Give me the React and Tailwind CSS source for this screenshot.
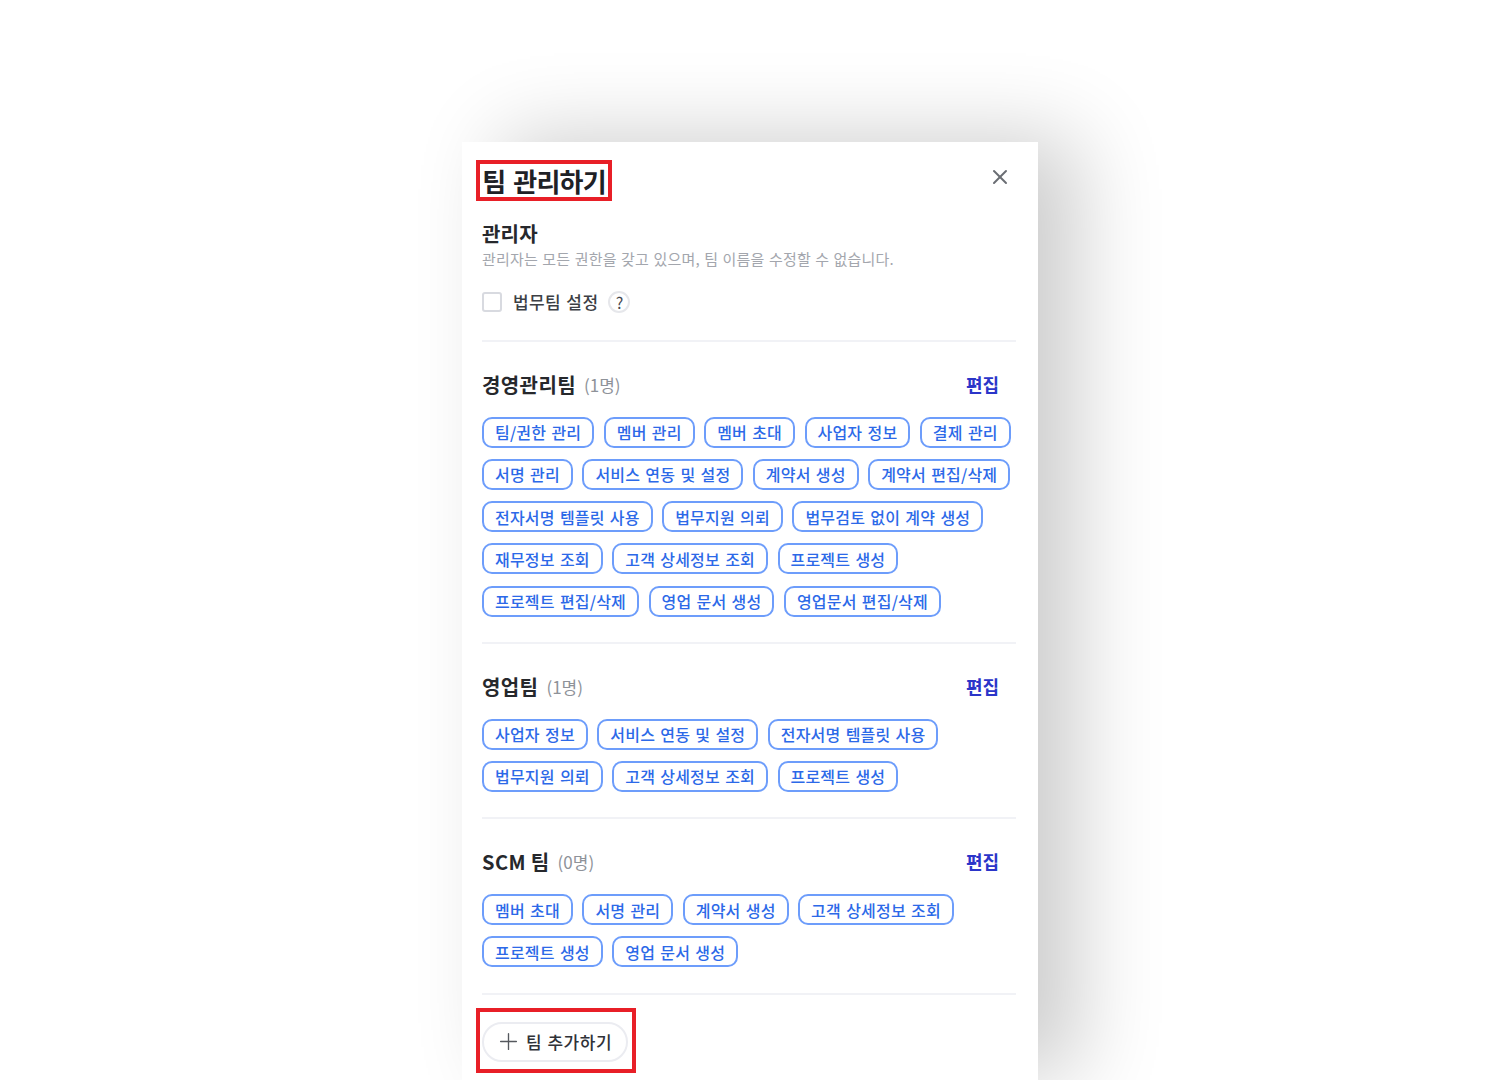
import React from 'react';
import { X, Plus } from 'lucide-react';

const teams = [
  {
    name: '경영관리팀',
    count: '(1명)',
    rows: [
      ['팀/권한 관리', '멤버 관리', '멤버 초대', '사업자 정보', '결제 관리'],
      ['서명 관리', '서비스 연동 및 설정', '계약서 생성', '계약서 편집/삭제'],
      ['전자서명 템플릿 사용', '법무지원 의뢰', '법무검토 없이 계약 생성'],
      ['재무정보 조회', '고객 상세정보 조회', '프로젝트 생성'],
      ['프로젝트 편집/삭제', '영업 문서 생성', '영업문서 편집/삭제'],
    ],
  },
  {
    name: '영업팀',
    count: '(1명)',
    rows: [
      ['사업자 정보', '서비스 연동 및 설정', '전자서명 템플릿 사용'],
      ['법무지원 의뢰', '고객 상세정보 조회', '프로젝트 생성'],
    ],
  },
  {
    name: 'SCM 팀',
    count: '(0명)',
    rows: [
      ['멤버 초대', '서명 관리', '계약서 생성', '고객 상세정보 조회'],
      ['프로젝트 생성', '영업 문서 생성'],
    ],
  },
];

function Team({ team }) {
  return (
    <section className="border-b-2 border-[#f1f2f6] pt-[27px] pb-[25.4px]">
      <div className="flex h-[32px] items-center justify-between pr-[17px]">
        <div className="flex items-center gap-[8px]">
          <h3 className="text-[20px] font-bold leading-[32px] tracking-[0.4px] text-[#26282c]">{team.name}</h3>
          <span className="text-[17px] leading-[32px] text-[#8e9299]">{team.count}</span>
        </div>
        <button className="-mt-[2px] text-[18px] font-bold leading-[32px] text-[#2b35c9]">편집</button>
      </div>
      <div className="mt-[15.8px] flex flex-col gap-[11.2px]">
        {team.rows.map((row, i) => (
          <div key={i} className="flex gap-[9.5px]">
            {row.map((chip) => (
              <span
                key={chip}
                className="flex h-[31px] items-center whitespace-nowrap rounded-[10px] border-2 border-[#6d9dfb] bg-white px-[11px] text-[16px] font-medium tracking-[0.2px] [word-spacing:1.4px] text-[#2c69e8]"
              >
                {chip}
              </span>
            ))}
          </div>
        ))}
      </div>
    </section>
  );
}

export default function App() {
  return (
    <div className="h-[1080px] overflow-hidden bg-white pl-[462px] pt-[142px] font-['Noto_Sans_CJK_KR','Noto_Sans',sans-serif]">
      <div className="h-[938px] w-[576px] bg-white pl-[20px] pr-[22px] pt-[18px] shadow-[40px_-5px_80px_rgba(0,0,0,0.2)]">
        <div className="flex items-start justify-between">
          <h1 className="-ml-[6px] flex h-[41px] w-[136px] items-center justify-center border-[4px] border-[#e81f27] text-[26px] font-bold tracking-[-0.8px] [word-spacing:3px] text-[#1e2126]">
            팀 관리하기
          </h1>
          <button className="mr-[4px] mt-[5px] text-[#6a6d73]">
            <X size={24} strokeWidth={2} />
          </button>
        </div>

        <div className="border-b-2 border-[#f1f2f6] pb-[27px]">
          <h2 className="mt-[18px] text-[20px] font-bold leading-[30px] tracking-[0.2px] text-[#26282c]">관리자</h2>
          <p className="text-[15px] leading-[20px] tracking-[0.2px] [word-spacing:0.8px] text-[#a3a6ad]">
            관리자는 모든 권한을 갖고 있으며, 팀 이름을 수정할 수 없습니다.
          </p>
          <label className="mt-[22px] flex h-[22px] items-center">
            <span className="h-[20px] w-[20px] rounded-[3px] border-2 border-[#d8dae0] bg-white" />
            <span className="ml-[11px] text-[17px] font-medium tracking-[0.4px] [word-spacing:1px] text-[#3c3f45]">법무팀 설정</span>
            <span className="ml-[10px] flex h-[22px] w-[22px] items-center justify-center rounded-full border-2 border-[#e6e7eb] text-[16px] text-[#45484e]">
              ?
            </span>
          </label>
        </div>

        {teams.map((team) => (
          <Team key={team.name} team={team} />
        ))}

        <div className="-ml-[6px] mt-[13px] h-[65px] w-[160px] border-[4px] border-[#e81f27] pl-[2px] pt-[10px]">
          <button className="flex h-[40px] w-[146px] items-center rounded-full border-2 border-[#ebecf1] pl-[11px] text-[17px] font-medium tracking-[0.5px] [word-spacing:1px] text-[#2f3238]">
            <Plus size={27} strokeWidth={1.2} className="text-[#55585e]" />
            <span className="ml-[4px]">팀 추가하기</span>
          </button>
        </div>
      </div>
    </div>
  );
}
